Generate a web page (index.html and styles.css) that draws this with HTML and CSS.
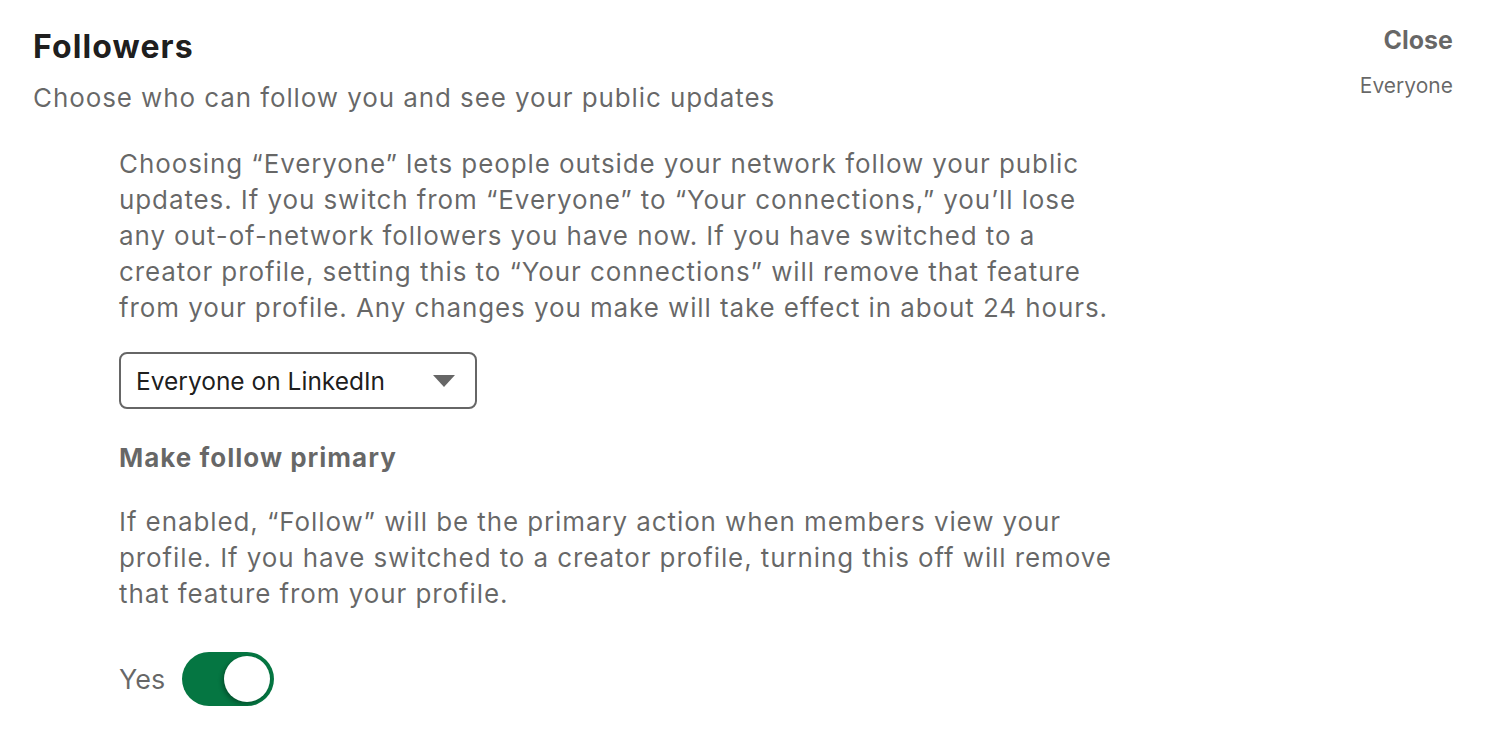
FILE: index.html
```html
<!DOCTYPE html>
<html>
<head>
<meta charset="utf-8">
<title>Followers</title>
<link rel="stylesheet" href="styles.css">
</head>
<body>
<div class="setting">
  <div class="setting_head">
    <div class="head_left">
      <h1 class="setting_title">Followers</h1>
      <p class="setting_sub">Choose who can follow you and see your public updates</p>
    </div>
    <div class="head_right">
      <button class="close_btn">Close</button>
      <span class="current_value">Everyone</span>
    </div>
  </div>

  <div class="setting_body">
    <p class="body_text">Choosing “Everyone” lets people outside your network follow your public updates. If you switch from “Everyone” to “Your connections,” you’ll lose any out-of-network followers you have now. If you have switched to a creator profile, setting this to “Your connections” will remove that feature from your profile. Any changes you make will take effect in about 24 hours.</p>

    <div class="select_box">
      <span class="select_label">Everyone on LinkedIn</span>
      <svg class="select_caret" width="22" height="12" viewBox="0 0 22 12"><path d="M0 0 L22 0 L11 12 Z" fill="#666"/></svg>
    </div>

    <h2 class="sub_title">Make follow primary</h2>
    <p class="body_text">If enabled, “Follow” will be the primary action when members view your profile. If you have switched to a creator profile, turning this off will remove that feature from your profile.</p>

    <div class="toggle_row">
      <span class="toggle_label">Yes</span>
      <span class="toggle on"><span class="knob"></span></span>
    </div>
  </div>
</div>
</body>
</html>
```

FILE: styles.css
```css
body{
  margin: 0;
  background-color: #fff;
  font-family: Inter, 'Noto Sans', sans-serif;
  color: rgba(0,0,0,0.6);
}

.setting{
  padding: 26px 37px 0 33px;
}

.setting_head{
  display: flex;
  justify-content: space-between;
  align-items: flex-start;
}

.setting_title{
  margin: 0;
  font-size: 32px;
  line-height: 42px;
  font-weight: 700;
  letter-spacing: 1.1px;
  color: rgba(0,0,0,0.9);
}

.setting_sub{
  margin: 12px 0 0 0;
  font-size: 26px;
  line-height: 36px;
  letter-spacing: 0.9px;
  color: rgba(0,0,0,0.6);
}

.head_right{
  display: flex;
  flex-direction: column;
  align-items: flex-end;
}

.close_btn{
  border: none;
  background: none;
  padding: 0;
  font-family: inherit;
  font-size: 25px;
  line-height: 28px;
  font-weight: 700;
  color: rgba(0,0,0,0.6);
}

.current_value{
  margin-top: 20px;
  font-size: 21px;
  line-height: 24px;
}

.setting_body{
  padding-left: 86px;
  padding-top: 30px;
  width: 1000px;
}

.body_text{
  margin: 0;
  font-size: 26px;
  line-height: 36px;
  letter-spacing: 0.9px;
  color: rgba(0,0,0,0.6);
}

.select_box{
  margin-top: 26px;
  width: 358px;
  height: 57px;
  box-sizing: border-box;
  border: 2px solid #666;
  border-radius: 8px;
  display: flex;
  align-items: center;
  justify-content: space-between;
  padding: 0 20px 0 15px;
}

.select_label{
  font-size: 24.5px;
  color: rgba(0,0,0,0.9);
}

.sub_title{
  margin: 31px 0 0 0;
  font-size: 26px;
  line-height: 36px;
  font-weight: 700;
  letter-spacing: 1px;
  color: rgba(0,0,0,0.6);
}

.sub_title + .body_text{
  margin-top: 28px;
}

.toggle_row{
  margin-top: 40px;
  display: flex;
  align-items: center;
  gap: 17px;
}

.toggle_label{
  font-size: 27px;
}

.toggle{
  position: relative;
  width: 92px;
  height: 54px;
  border-radius: 27px;
  background-color: #057642;
  display: inline-block;
}

.knob{
  position: absolute;
  top: 4px;
  right: 4px;
  width: 46px;
  height: 46px;
  border-radius: 50%;
  background: #fff;
  box-shadow: -2px 2px 4px rgba(0,0,0,0.3);
}
```
